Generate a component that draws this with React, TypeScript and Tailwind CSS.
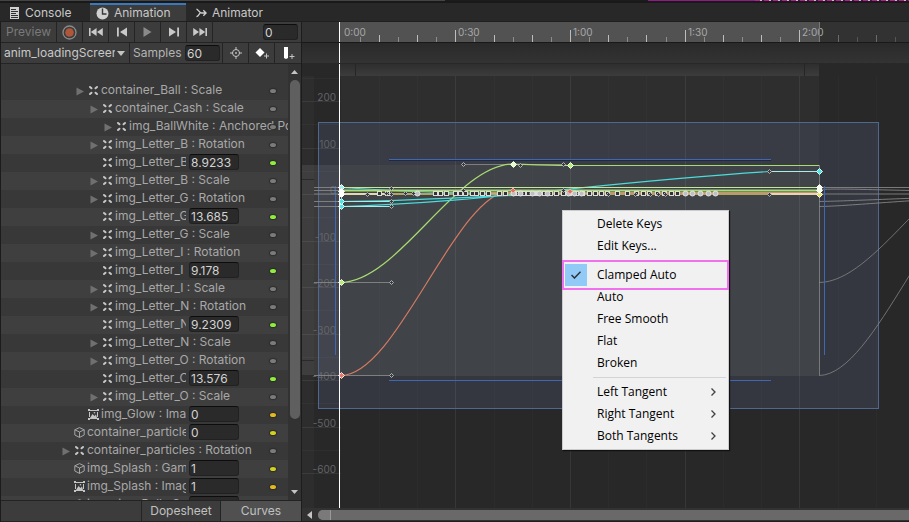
import type { ReactNode } from "react";

type IconKind = "transform" | "image" | "cube";
type Dot = "none" | "green" | "orange" | "yellow";
type Row = {
  level: 0 | 1 | 2 | 3;
  icon: IconKind;
  label: string;
  value?: string;
  arrow?: boolean;
  dot?: Dot;
};

const rows: Row[] = [
  { level: 1, icon: "transform", label: "container_Ball : Scale", arrow: true },
  { level: 2, icon: "transform", label: "container_Cash : Scale", arrow: true },
  { level: 3, icon: "transform", label: "img_BallWhite : Anchored Position", arrow: true },
  { level: 2, icon: "transform", label: "img_Letter_B : Rotation", arrow: true },
  { level: 2, icon: "transform", label: "img_Letter_B", value: "8.9233", dot: "green" },
  { level: 2, icon: "transform", label: "img_Letter_B : Scale", arrow: true },
  { level: 2, icon: "transform", label: "img_Letter_G : Rotation", arrow: true },
  { level: 2, icon: "transform", label: "img_Letter_G", value: "13.685", dot: "green" },
  { level: 2, icon: "transform", label: "img_Letter_G : Scale", arrow: true },
  { level: 2, icon: "transform", label: "img_Letter_I : Rotation", arrow: true },
  { level: 2, icon: "transform", label: "img_Letter_I", value: "9.178", dot: "green" },
  { level: 2, icon: "transform", label: "img_Letter_I : Scale", arrow: true },
  { level: 2, icon: "transform", label: "img_Letter_N : Rotation", arrow: true },
  { level: 2, icon: "transform", label: "img_Letter_N", value: "9.2309", dot: "green" },
  { level: 2, icon: "transform", label: "img_Letter_N : Scale", arrow: true },
  { level: 2, icon: "transform", label: "img_Letter_O : Rotation", arrow: true },
  { level: 2, icon: "transform", label: "img_Letter_O", value: "13.576", dot: "green" },
  { level: 2, icon: "transform", label: "img_Letter_O : Scale", arrow: true },
  { level: 1, icon: "image", label: "img_Glow : Image", value: "0", dot: "orange" },
  { level: 0, icon: "cube", label: "container_particles", value: "0", dot: "yellow" },
  { level: 0, icon: "transform", label: "container_particles : Rotation", arrow: true },
  { level: 0, icon: "cube", label: "img_Splash : Game", value: "1", dot: "yellow" },
  { level: 0, icon: "image", label: "img_Splash : Image", value: "1", dot: "orange" },
  { level: 0, icon: "cube", label: "img_ring_Ball : Scale", value: "1", dot: "yellow" },
];

const indent = ["pl-[61px]", "pl-[75px]", "pl-[89px]", "pl-[103px]"];
const dotColor: Record<Dot, string> = {
  none: "bg-[#7b7b7b]",
  green: "bg-[#8fee3c]",
  orange: "bg-[#e6b91e]",
  yellow: "bg-[#d2d21e]",
};

const fieldClass =
  "h-4 rounded-[3px] border border-[#212121] border-t-[#0d0d0d] bg-[#2a2a2a] px-px text-[12px] leading-[14px] text-[#d2d2d2] outline-none";

function RowIcon({ kind }: { kind: IconKind }) {
  if (kind === "transform")
    return (
      <svg className="h-[11px] w-[11px] shrink-0" viewBox="0 0 11 11" fill="none" stroke="#c8c8c8" strokeWidth="2" strokeLinecap="round" aria-hidden="true">
        <path d="M2 2L3.500 3.300M9 2L7.500 3.300M2 9L3.500 7.700M9 9L7.500 7.700" />
      </svg>
    );
  if (kind === "image")
    return (
      <svg className="h-[11px] w-[11px] shrink-0" viewBox="0 0 11 11" fill="none" stroke="#c4c4c4" aria-hidden="true">
        <path d="M2 1.500h7M2 9.500h7M1.500 3v5M9.500 3v5" />
        <path d="M0 0h2v2H0zM9 0h2v2H9zM0 9h2v2H0zM9 9h2v2H9zM2 9l2.500-4 2 2L8 5.500 9 9z" fill="#c4c4c4" stroke="none" />
        <circle cx="6.500" cy="3.800" r="0.800" fill="#c4c4c4" stroke="none" />
      </svg>
    );
  return (
    <svg className="h-[11px] w-[11px] shrink-0" viewBox="0 0 11 11" fill="none" stroke="#a5a5a5" strokeLinejoin="round" aria-hidden="true">
      <path d="M5.500 0.600L10.200 2.800V8L5.500 10.400 0.800 8V2.800zM0.800 2.800L5.500 5l4.700-2.200M5.500 5v5.400" />
    </svg>
  );
}

function PropertyRow({ row, dark }: { row: Row; dark: boolean }) {
  return (
    <li className={`flex h-[18px] shrink-0 pb-0.5 ${dark ? "bg-[#383838]" : "bg-[#3f3f3f]"}`}>
      <div className={`flex min-w-0 flex-1 items-center ${indent[row.level]}`}>
        {row.arrow ? (
          <button aria-label={`Expand ${row.label}`} className="mr-1 w-2 shrink-0 pt-0.5">
            <svg className="h-[9px] w-2" viewBox="0 0 8 9" fill="#707070" aria-hidden="true">
              <path d="M0.500 0.500L8 4.500 0.500 8.500z" />
            </svg>
          </button>
        ) : (
          <span className="mr-1 w-2 shrink-0" />
        )}
        <RowIcon kind={row.icon} />
        <span className="ml-0.5 min-w-0 flex-1 overflow-hidden whitespace-nowrap text-[#a8a8a8]">{row.label}</span>
      </div>
      {row.value !== undefined && (
        <input aria-label={row.label} defaultValue={row.value} className={`${fieldClass} ml-[3px] w-[50px] shrink-0`} />
      )}
      <div className={row.value === undefined ? "-ml-[18px] w-[18px] shrink-0 pt-[7px]" : "w-[49px] shrink-0 pl-[31px] pt-[7px]"}>
        <button aria-label="Key options" className={`block h-1 w-1.5 rounded-[50%] shadow-[0_0_1px_1px_#2c2c2c] ${dotColor[row.dot ?? "none"]}`} />
      </div>
    </li>
  );
}

function Tab({ active, className, icon, children }: { active?: boolean; className: string; icon: ReactNode; children: ReactNode }) {
  return (
    <button
      role="tab"
      aria-selected={!!active}
      className={`flex shrink-0 items-center gap-[5px] border-t-2 text-[#c8c8c8] ${
        active ? "border-[#3a79bb] bg-[#3c3c3c]" : "border-transparent"
      } ${className}`}
    >
      {icon}
      {children}
    </button>
  );
}

function ToolButton({ label, className, children }: { label: string; className: string; children: ReactNode }) {
  return (
    <button aria-label={label} className={`flex h-full shrink-0 items-center justify-center border-r border-[#242424] ${className}`}>
      {children}
    </button>
  );
}

function Glyph({ d, w }: { d: string; w: number }) {
  return (
    <svg width={w} height="10" viewBox={`0 0 ${w} 10`} fill="#c9c9c9" aria-hidden="true">
      <path d={d} />
    </svg>
  );
}

function SidePanel() {
  return (
    <aside className="flex w-[302px] shrink-0 flex-col border-x border-[#1c1c1c] bg-[#383838]">
      <div className="flex h-[21px] shrink-0 items-center border-b border-[#242424] bg-[#3c3c3c]">
        <ToolButton label="Preview" className="w-14 text-[#7a7a7a]">
          Preview
        </ToolButton>
        <ToolButton label="Record" className="w-[26px]">
          <svg width="15" height="15" viewBox="0 0 15 15" aria-hidden="true">
            <circle cx="7.500" cy="7.500" r="6.500" fill="none" stroke="#8b8b8b" strokeWidth="1.300" />
            <circle cx="7.500" cy="7.500" r="4.300" fill="#b0573a" />
          </svg>
        </ToolButton>
        <ToolButton label="First frame" className="w-[26px]">
          <Glyph w={14} d="M0 1h1.600v8H0zM7.600 1v8L1.800 5zM13.800 1v8L8 5z" />
        </ToolButton>
        <ToolButton label="Previous key" className="w-[26px]">
          <Glyph w={10} d="M0 0.500h1.800v9H0zM10 0.500v9L3 5z" />
        </ToolButton>
        <ToolButton label="Play" className="w-[26px]">
          <svg width="9" height="10" viewBox="0 0 9 10" fill="#8a8a8a" aria-hidden="true">
            <path d="M0.500 0L8.500 5 0.500 10z" />
          </svg>
        </ToolButton>
        <ToolButton label="Next key" className="w-[26px]">
          <Glyph w={10} d="M8.200 0.500H10v9H8.200zM0 0.500v9L7 5z" />
        </ToolButton>
        <ToolButton label="Last frame" className="w-[26px]">
          <Glyph w={14} d="M12.400 1H14v8h-1.600zM6.400 1v8l5.800-4zM0.200 1v8L6 5z" />
        </ToolButton>
        <input aria-label="Current frame" defaultValue="0" className={`${fieldClass} mr-[3px] ml-auto w-[35px]`} />
      </div>
      <div className="flex h-[21px] shrink-0 items-center border-b border-[#242424] bg-[#3c3c3c]">
        <div className="relative h-full w-[129px] shrink-0 border-r border-[#242424]">
          <select aria-label="Clip" className="h-full w-full appearance-none bg-transparent pr-[14px] pl-[3px] text-[#c8c8c8] outline-none">
            <option>anim_loadingScreen</option>
          </select>
          <svg className="pointer-events-none absolute top-2 right-1" width="8" height="5" viewBox="0 0 8 5" fill="#c4c4c4" aria-hidden="true">
            <path d="M0 0h8L4 5z" />
          </svg>
        </div>
        <label htmlFor="samples" className="pl-[3px] text-[#b4b4b4]">
          Samples
        </label>
        <div className="flex h-full flex-1 items-center justify-end border-r border-[#242424] pr-0.5">
          <input id="samples" defaultValue="60" className={`${fieldClass} w-[35px]`} />
        </div>
        <ToolButton label="Filter by selection" className="w-[26px]">
          <svg width="12" height="12" viewBox="0 0 12 12" fill="none" stroke="#c4c4c4" aria-hidden="true">
            <circle cx="6" cy="6" r="3.500" />
            <path d="M6 0v3M6 9v3M0 6h3M9 6h3" />
            <circle cx="6" cy="6" r="0.900" fill="#c4c4c4" stroke="none" />
          </svg>
        </ToolButton>
        <ToolButton label="Add keyframe" className="w-[26px]">
          <svg width="14" height="13" viewBox="0 0 14 13" aria-hidden="true">
            <path d="M5 1L9.500 5.500 5 10 0.500 5.500z" fill="#fff" />
            <path d="M11.500 6.500v5M9 9h5" stroke="#c4c4c4" />
          </svg>
        </ToolButton>
        <button aria-label="Add event" className="flex w-[26px] shrink-0 items-center justify-center">
          <svg width="13" height="13" viewBox="0 0 13 13" aria-hidden="true">
            <path d="M2 0h4v11L4 12 2 11z" fill="#fff" />
            <path d="M10 7v5M7.500 9.500h5" stroke="#c4c4c4" />
          </svg>
        </button>
      </div>
      <div className="flex min-h-0 flex-1">
        <ul className="flex h-full min-w-0 flex-1 flex-col overflow-hidden pt-[18px]">
          {rows.map((row, i) => (
            <PropertyRow key={i} row={row} dark={i % 2 === 0} />
          ))}
        </ul>
        <div className="flex w-[13px] shrink-0 flex-col items-center bg-[#323232] pt-1.5 pb-1.5">
          <svg width="7" height="4" viewBox="0 0 7 4" fill="#c4c4c4" aria-hidden="true">
            <path d="M0 4h7L3.500 0z" />
          </svg>
          <div className="my-1.5 flex min-h-0 w-2.5 flex-1 flex-col">
            <div className="h-[84%] rounded-full bg-[#5f5f5f]" />
          </div>
          <svg width="7" height="4" viewBox="0 0 7 4" fill="#c4c4c4" aria-hidden="true">
            <path d="M0 0h7L3.500 4z" />
          </svg>
        </div>
      </div>
      <div role="tablist" aria-label="View" className="flex h-[22px] shrink-0 justify-end border-y border-[#232323] bg-[#3c3c3c] text-[#c0c0c0]">
        <button role="tab" aria-selected="false" className="w-20 border-x border-[#232323]">
          Dopesheet
        </button>
        <button role="tab" aria-selected="true" className="w-20 bg-[#505050]">
          Curves
        </button>
      </div>
    </aside>
  );
}

/* Timeline: one tick every five frames, a label every thirty. */
const tickX = (k: number) => Math.floor(39.2 + 19.11 * k);
const ticks = Array.from({ length: 60 }, (_, i) => i + 1);
const timeLabels = ["0:00", "0:30", "1:00", "1:30", "2:00"];

function Ruler() {
  return (
    <svg className="block h-5 w-full shrink-0 bg-[#323232]" aria-label="Timeline">
      <rect x="38" width="479" height="20" fill="#525252" />
      {ticks.map((k) => {
        const h = k % 6 === 0 ? 12 : k % 2 === 0 ? 7 : 5;
        const out = k > 24;
        const fill = k % 2 === 0 ? (out ? "#6a6a6a" : "#bdbdbd") : out ? "#555555" : "#8c8c8c";
        return <rect key={k} x={tickX(k)} y={20 - h} width="1" height={h} fill={fill} />;
      })}
      {timeLabels.map((t, i) => (
        <text key={t} x={tickX(i * 6) + 3} y="14" fontSize="10" fill="#a8a8a8">
          {t}
        </text>
      ))}
      <rect x="517" width="1" height="20" fill="#777" />
      <rect x="37" width="1" height="20" fill="#fff" />
    </svg>
  );
}

const valueLabels = [200, 100, 0, -100, -200, -300, -400, -500, -600];
const boxKeys = [
  379, 387, 435, 440, 446, 455, 460, 465, 472, 476, 482, 488, 499, 505, 514, 518, 523, 528, 533, 538, 544, 550, 556, 563, 569, 576,
  582, 589, 595, 601, 607, 617, 627, 636, 643, 649, 657, 664, 671, 677,
];
const roundKeys = [417, 513, 520, 532, 539, 547, 568, 574, 581, 685, 692, 700, 708, 715];
const tangentKeys: [number, number][] = [
  [391, 188], [391, 194], [391, 201], [391, 206], [391, 282], [391, 375], [463, 164], [520, 165], [563, 164],
  [367, 194], [386, 193], [405, 193], [413, 193], [463, 190], [563, 190], [769, 171], [769, 194], [608, 194], [635, 194], [650, 194], [658, 194], [665, 194],
];

function Diamond({ x, y, r, fill, stroke }: { x: number; y: number; r: number; fill: string; stroke: string }) {
  return <path d={`M${x} ${y - r}L${x + r} ${y} ${x} ${y + r} ${x - r} ${y}z`} fill={fill} stroke={stroke} />;
}

function CurveChart() {
  return (
    <svg className="block h-full w-full bg-[#282828]" aria-label="Animation curves">
      <g transform="translate(-302 -64)">
        <rect x="341" y="76" width="478" height="89" fill="#2e2e2e" />
        <rect x="302" y="76" width="12" height="432" fill="#2d2d2d" />
        <rect x="302" y="165" width="12" height="210" fill="#3e3e3e" />
        <path d="M302 179.500h12M302 360.500h12" stroke="#2a2a2a" />
        <rect x="314" y="165" width="27" height="211" fill="#3a3a3a" />

        <rect x="318.500" y="122.500" width="560" height="286" fill="#5a6a88" fillOpacity="0.240" />
        <rect x="341" y="165" width="478" height="211" fill="#404347" />

        {ticks.filter((k) => k % 2 === 0).map((k) => (
          <rect key={k} x={tickX(k) + 302} y="76" width="1" height="432" fill={k % 6 === 0 ? "#ffffff12" : "#ffffff05"} />
        ))}
        {valueLabels.map((v, i) => (
          <g key={v}>
            <rect x="302" y={Math.round(101 + i * 46.5)} width="39" height="1" fill="#ffffff12" />
            <rect x="302" y={Math.round(77.5 + i * 46.5)} width="39" height="1" fill="#ffffff08" />
            <text x="336" y={Math.round(101 + i * 46.5)} fontSize="10" textAnchor="end" fill="#626468">
              {v}
            </text>
          </g>
        ))}
        <rect x="318.500" y="122.500" width="560" height="286" fill="none" stroke="#506890" />
        <path d="M389 159.500h382M389 380.500h382M335.500 186v169" stroke="#3f68b4" />
        <path d="M389 160.500h382" stroke="#1c2a48" />

        <g stroke="#8a8a8a" fill="none" strokeOpacity="0.850">
          <path d="M314 187.500h27M314 190.500h27M314 194h27M314 201.500h77M314 206.500h77M314 282.500h77M314 375.500h77M463 164.500h100" />
          <path d="M819 187.500h1200M819 189.500C850 188 880 191 1009 191.500M819 194h1200M819 201.500C850 201 880 199 1009 195M819 206.500C850 206 890 201 1009 195" />
          <path d="M819 282.500C876 282 934 164 991 164M819 375.500C876 375 934 190 991 190" strokeOpacity="0.750" />
          <path d="M819.500 165v210" stroke="#909090" strokeOpacity="0.750" />
        </g>
        <path d="M824.500 186v169" stroke="#3f68b4" />

        <g fill="none">
          <path d="M341 375.500C398 375 456 190 513 190" stroke="#d67a63" strokeWidth="1.200" />
          <path d="M341 282.500C398 282 456 164 513 164C540 165 550 165.500 570 165.500H819" stroke="#a8dc72" strokeWidth="1.200" />
          <path d="M341 201.500C430 201 520 193 600 193M341 206.500C480 203 600 182 770 171.500H819" stroke="#4cdcdc" strokeWidth="1.200" />
          <path d="M341 187.500C400 191 430 193 500 193" stroke="#4cdcdc" />
          <path d="M341 187.500h478" stroke="#c4e6a0" />
          <path d="M341 190.500h478" stroke="#a8dc72" strokeWidth="2" />
          <path d="M490 192.500h329" stroke="#c99078" />
          <path d="M341 194h478" stroke="#d6c468" strokeWidth="1.500" />
          <path d="M341 194h50M769 194h50" stroke="#f2ecc8" strokeWidth="1.500" />
          <path d="M341 206.500h50M341 201.500h50M769 171.500h50" stroke="#a8ecec" />
        </g>

        {boxKeys.map((x) => (
          <rect key={x} x={x - 1.5} y="191.500" width="4" height="4" fill="#333" stroke="#dcdcdc" />
        ))}
        {roundKeys.map((x) => (
          <circle key={x} cx={x + 0.5} cy="193.500" r="2.500" fill="#c0c0c4" stroke="#e6e6e6" />
        ))}
        {tangentKeys.map(([x, y]) => (
          <Diamond key={`${x}-${y}`} x={x + 0.5} y={y + 0.5} r={2} fill="#3a3a3a" stroke="#b4b4b4" />
        ))}

        <Diamond x={513} y={190.5} r={2.5} fill="#e07060" stroke="#f0b0a0" />
        <Diamond x={570} y={191.5} r={2.5} fill="#e07060" stroke="#f0b0a0" />
        <Diamond x={513.5} y={164.5} r={3} fill="#eafad0" stroke="#f2ffe0" />
        <Diamond x={570.5} y={165.5} r={3} fill="#b8ec80" stroke="#f2ffe0" />
        <Diamond x={819.5} y={171.5} r={3} fill="#50e4e4" stroke="#d8ffff" />
        <Diamond x={819.5} y={194.5} r={3} fill="#e8e060" stroke="#fff" />
        <Diamond x={819.5} y={187.5} r={3} fill="#f4ffe8" stroke="#fff" />
        <Diamond x={819.5} y={190.5} r={3} fill="#f4ffe8" stroke="#fff" />
        <Diamond x={341.5} y={206.5} r={3} fill="#50e4e4" stroke="#d8ffff" />
        <Diamond x={341.5} y={201.5} r={3} fill="#50e4e4" stroke="#d8ffff" />
        <Diamond x={341.5} y={187.5} r={3} fill="#a0f0f0" stroke="#fff" />
        <Diamond x={341.5} y={191.5} r={3} fill="#fff" stroke="#fff" />
        <Diamond x={341.5} y={194.5} r={3} fill="#fff" stroke="#fff" />
        <Diamond x={341.5} y={282.5} r={3} fill="#b8ec80" stroke="#f2ffe0" />
        <Diamond x={341.5} y={375.5} r={3} fill="#e87868" stroke="#ffe8e0" />
        <rect x="339" y="64" width="1" height="444" fill="#fff" />
      </g>
    </svg>
  );
}

function MenuItem({ label, checked, submenu }: { label: string; checked?: boolean; submenu?: boolean }) {
  return (
    <li role="none" className="relative">
      <button
        role={checked ? "menuitemcheckbox" : "menuitem"}
        aria-checked={checked ? true : undefined}
        aria-haspopup={submenu ? "menu" : undefined}
        className="flex h-[22px] w-full items-center pr-2.5"
      >
        <span className={`mr-2.5 flex h-[22px] w-[22px] items-center justify-center ${checked ? "bg-[#91c9f7]" : ""}`}>
          {checked && (
            <svg width="10" height="8" viewBox="0 0 10 8" fill="none" stroke="#303030" strokeWidth="1.500" aria-hidden="true">
              <path d="M0.500 4L3.500 7 9.500 0.800" />
            </svg>
          )}
        </span>
        {label}
        {submenu && (
          <svg className="ml-auto" width="5" height="8" viewBox="0 0 5 8" fill="none" stroke="#404040" strokeWidth="1.300" aria-hidden="true">
            <path d="M0.500 0.500L4 4 0.500 7.500" />
          </svg>
        )}
      </button>
      {checked && <span className="pointer-events-none absolute -inset-x-[3px] -inset-y-1 border-2 border-[#f070ee]" />}
    </li>
  );
}

function ContextMenu() {
  return (
    <ul
      role="menu"
      className="absolute top-[146px] left-[260px] w-[167px] border border-[#cccccc] bg-[#f1f1f1] p-0.5 font-['Open_Sans','Noto_Sans',sans-serif] text-[12px] text-black shadow-[1px_1px_1px_#111]"
    >
      <MenuItem label="Delete Keys" />
      <MenuItem label="Edit Keys..." />
      <li role="separator" className="h-[7px]" />
      <MenuItem label="Clamped Auto" checked />
      <MenuItem label="Auto" />
      <MenuItem label="Free Smooth" />
      <MenuItem label="Flat" />
      <MenuItem label="Broken" />
      <li role="separator" className="flex h-[7px] items-center pl-7">
        <span className="h-px w-full bg-[#d4d4d4]" />
      </li>
      <MenuItem label="Left Tangent" submenu />
      <MenuItem label="Right Tangent" submenu />
      <MenuItem label="Both Tangents" submenu />
    </ul>
  );
}

function CurvePanel() {
  return (
    <main className="flex min-w-0 flex-1 flex-col">
      <Ruler />
      <div className="flex h-[22px] shrink-0 border-t border-b border-t-[#191919] border-b-[#292929] bg-linear-to-b from-[#2a2a2a] to-[#333333] pl-[37px]">
        <span className="w-px bg-white" />
      </div>
      <div className="relative min-h-0 flex-1 overflow-hidden">
        <CurveChart />
        <div className="absolute top-0 left-[38px] h-3 w-[479px] bg-linear-to-b from-[#2e2e2e] to-[#3c3c3c] pr-3.5 pl-[15px]">
          <div className="h-full border-x border-[#262626]" />
        </div>
        <ContextMenu />
      </div>
      <div className="flex h-3.5 shrink-0 items-center gap-1.5 border-b border-[#202020] bg-[#323232] pl-[5px]">
        <svg width="5" height="8" viewBox="0 0 5 8" fill="#c4c4c4" aria-hidden="true">
          <path d="M5 0v8L0 4z" />
        </svg>
        <div className="flex h-2.5 flex-1 overflow-hidden rounded-l-full bg-[#696969]">
          <span className="w-[13px] border-r border-[#999999] bg-[#7a7a7a]" />
        </div>
      </div>
    </main>
  );
}

export default function App() {
  return (
    <div className="flex h-screen flex-col overflow-hidden bg-[#282828] font-['Inter',sans-serif] text-[12px] leading-4">
      <div className="flex h-[3px] shrink-0 border-b-2 border-[#191919] bg-[#1c1c1c]">
        <span className="w-[49%] bg-[#444444]" />
        <span className="ml-auto w-[107px] bg-[#901a88]" />
        <span className="w-[154px] bg-[repeating-linear-gradient(90deg,#b02090_0_5px,#e0b0d0_5px_7px,#501048_7px_9px)]" />
      </div>
      <div role="tablist" aria-label="Windows" className="flex h-[19px] shrink-0 border-b border-b-[#1f1f1f]">
        <Tab
          className="w-[90px] pl-[9px]"
          icon={
            <svg width="11" height="12" viewBox="0 0 11 12" aria-hidden="true">
              <path d="M1 0h9v12H1z" fill="#d0d0d0" />
              <path d="M2 2.500h5M2 4.500h7M2 6.500h5M2 8.500h7M2 10.500h7" stroke="#303030" />
            </svg>
          }
        >
          Console
        </Tab>
        <Tab
          active
          className="w-24 pl-1.5"
          icon={
            <svg width="13" height="13" viewBox="0 0 13 13" aria-hidden="true">
              <circle cx="6.500" cy="6.500" r="6" fill="#d0d0d0" />
              <path d="M6.500 1.500v5.500H10.500" fill="none" stroke="#383838" strokeWidth="1.400" />
            </svg>
          }
        >
          Animation
        </Tab>
        <Tab
          className="pr-5 pl-2.5"
          icon={
            <svg width="11" height="10" viewBox="0 0 12 10" fill="none" stroke="#d0d0d0" strokeWidth="1.400" aria-hidden="true">
              <path d="M0.500 0.800C2.500 1 3.500 5 6 5H11M0.500 9C2.500 8.800 3 6.500 4.500 5M8 2l3 3-3 3" />
            </svg>
          }
        >
          Animator
        </Tab>
      </div>
      <div className="flex min-h-0 flex-1">
        <SidePanel />
        <CurvePanel />
      </div>
    </div>
  );
}
